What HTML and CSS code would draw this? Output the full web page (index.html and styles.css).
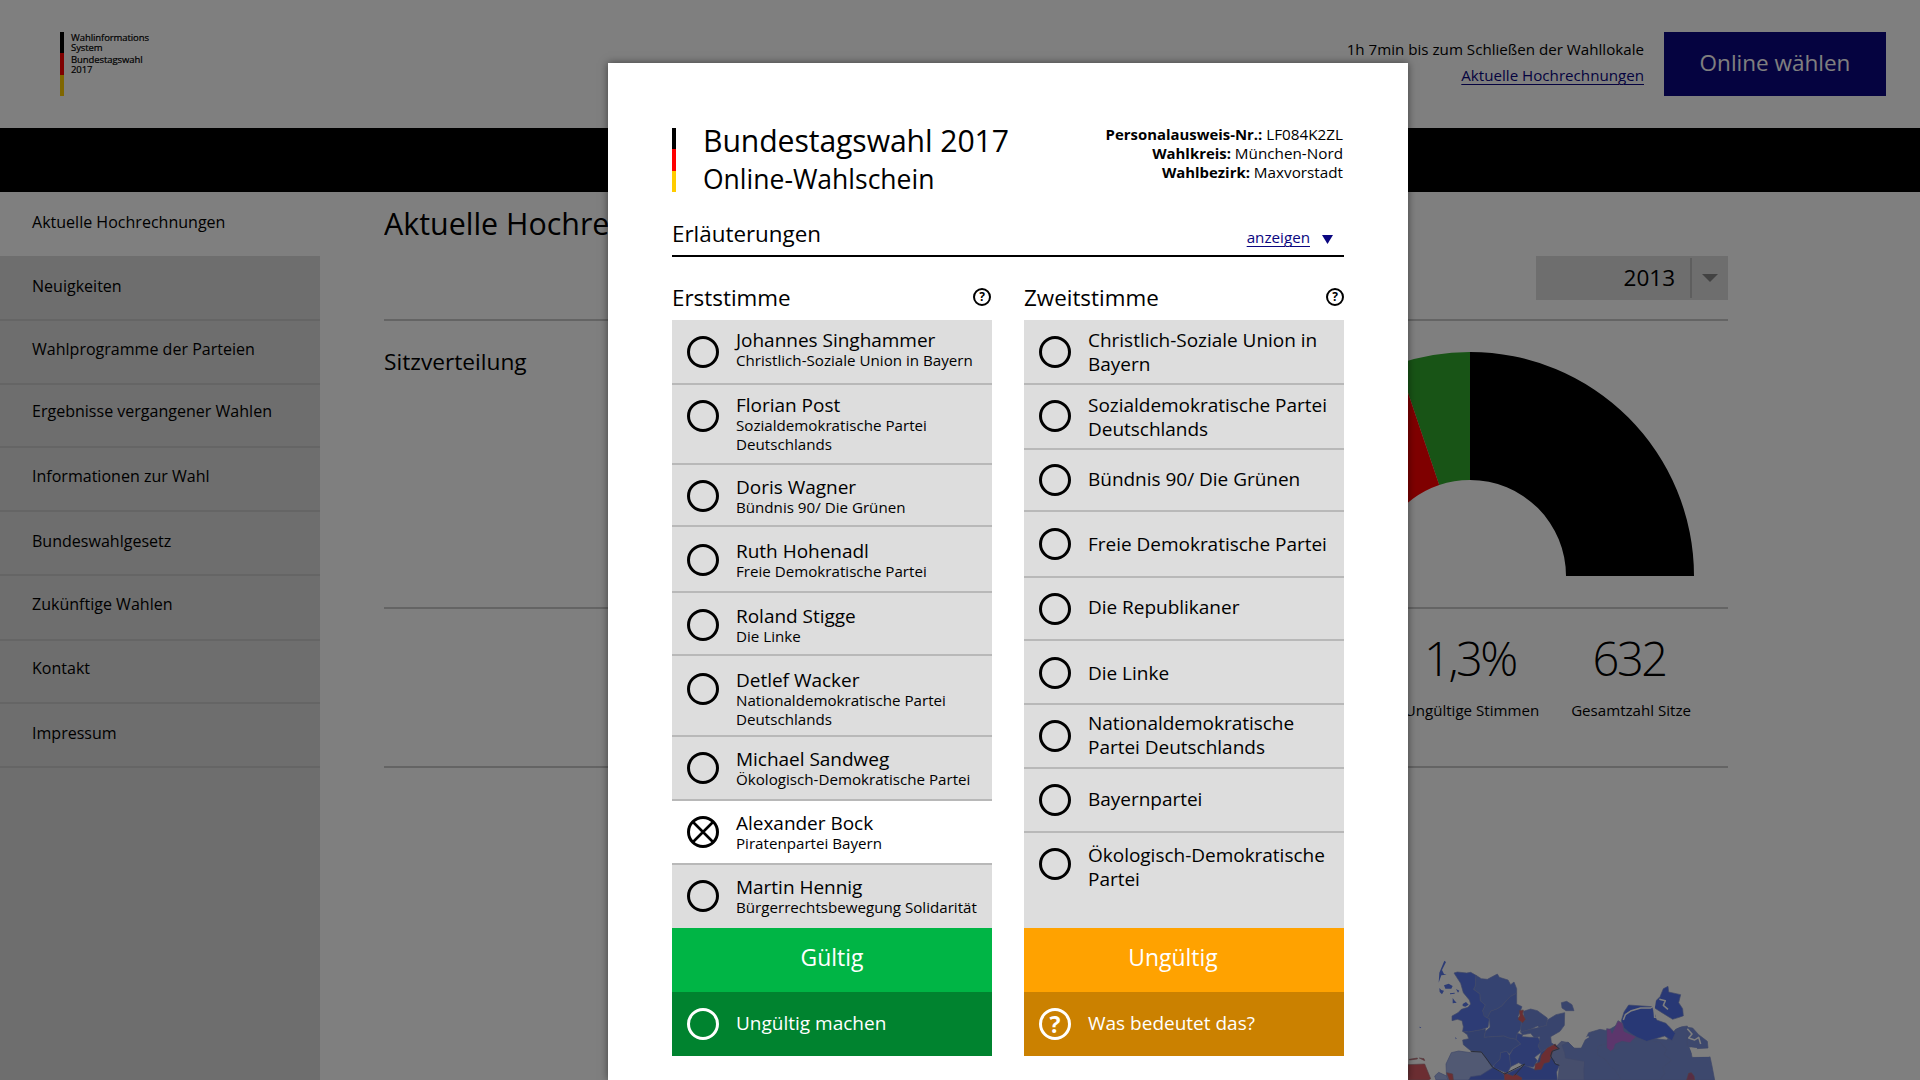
FILE: index.html
```html
<!DOCTYPE html>
<html lang="de">
<head>
<meta charset="utf-8">
<title>Bundestagswahl 2017</title>
<link rel="stylesheet" href="styles.css">
</head>
<body>
<div class="page">
  <header class="top">
    <div class="logo">
      <div class="flag"><i class="black"></i><i class="red"></i><i class="gold"></i></div>
      <div class="logo-text">
        <p>Wahlinformations<br>System</p>
        <p>Bundestagswahl<br>2017</p>
      </div>
    </div>
    <div class="status">
      <p>1h 7min bis zum Schließen der Wahllokale</p>
      <a class="link">Aktuelle Hochrechnungen</a>
    </div>
    <div class="vote">Online wählen</div>
  </header>
  <div class="band"></div>
  <div class="body">
    <nav class="side">
      <a class="active">Aktuelle Hochrechnungen</a>
      <a>Neuigkeiten</a>
      <a>Wahlprogramme der Parteien</a>
      <a>Ergebnisse vergangener Wahlen</a>
      <a>Informationen zur Wahl</a>
      <a>Bundeswahlgesetz</a>
      <a>Zukünftige Wahlen</a>
      <a>Kontakt</a>
      <a>Impressum</a>
    </nav>
    <main class="main">
      <section class="head">
        <h1>Aktuelle Hochre</h1>
        <div class="select">
          <span>2013</span>
          <svg width="16" height="8" viewBox="0 0 16 8"><path d="M0 0H16L8 8Z" fill="#848484"/></svg>
        </div>
      </section>
      <section class="seats">
        <h2>Sitzverteilung</h2>
        <svg class="donut" width="448" height="224" viewBox="-224 -224 448 224">
          <path d="M0-224A224 224 0 0 1 224 0H96A96 96 0 0 0 0-96Z" fill="#000"/>
          <path d="M0-224A224 224 0 0 0-71.8-212.2L-30.8-91A96 96 0 0 1 0-96Z" fill="#30a82c"/>
          <path d="M-71.8-212.2A224 224 0 0 0-224 0H-96A96 96 0 0 1-30.8-91Z" fill="#f00"/>
        </svg>
      </section>
      <section class="stats">
        <div class="stat"><b>1,3%</b><span>Ungültige Stimmen</span></div>
        <div class="stat"><b>632</b><span>Gesamtzahl Sitze</span></div>
      </section>
      <svg class="map" width="320" height="140" viewBox="24 0 960 420">
        <g stroke="#7f90d0" stroke-width="2" stroke-linejoin="round">
          <path fill="#5a78ea" d="M162 99L172 96L200 99L212 97L228 106L226 138L221 148L240 162L241 182L256 195L248 212L256 230L268 236L264 262L240 270L206 276L188 274L190 260L186 242L172 238L156 242L156 228L174 218L184 208L204 202L212 192L208 180L190 158L182 130Z"/>
          <path fill="#6a86e2" d="M228 106L244 116L262 118L292 102L298 112L324 120L332 134L342 126L350 146L350 160L330 170L305 198L292 206L272 214L262 234L252 228L248 212L256 195L241 182L240 162L221 148L226 138Z"/>
          <path fill="#6480e0" d="M350 160L350 192L366 200L354 230L364 246L362 268L352 280L348 298L326 294L312 288L252 292L256 274L270 262L268 236L262 234L272 214L292 206L305 198L330 170Z"/>
          <path fill="#7088da" d="M370 214L392 207L412 212L442 234L440 256L418 262L412 258L392 268L362 276L364 246L374 240Z"/>
          <path fill="#7088da" d="M442 240L468 224L494 218L493 256L480 274L452 290L454 308L462 314L446 322L424 336L414 318L420 290L402 292L392 280L368 284L362 276L392 268L418 262L440 256Z"/>
          <path fill="#6480dc" d="M206 276L240 270L256 266L256 274L252 292L312 288L326 294L348 298L362 312L340 326L328 342L320 334L302 338L300 358L282 374L278 384L256 354L244 336L212 332L190 314L188 300L206 296L202 284L188 274Z"/>
          <path fill="#5c78e4" d="M348 298L352 280L368 284L366 290L390 292L414 292L420 304L414 318L424 336L404 352L412 362L400 382L374 378L356 368L332 380L328 346L340 326L362 312Z"/>
          <path fill="#5c78e4" d="M302 338L320 334L328 346L332 380L322 400L282 384L282 374L300 358Z"/>
          <path fill="#a2b2e6" d="M140 420L138 372L154 338L176 333L212 338L244 336L258 356L278 384L264 400L252 420Z"/>
          <path fill="#a2b2e6" d="M104 408L116 397L140 408L144 420H108Z"/>
          <path fill="#5672e2" d="M206 420L212 410L242 406L280 382L314 404L374 376L404 388L424 336L448 322L460 348L466 368L478 376L470 396L472 420Z"/>
          <path fill="#8c9cd8" d="M470 318L484 304L506 308L522 324L546 326L548 320L554 420H474L478 376L452 350L458 328Z"/>
          <path fill="#7a90da" d="M486 316L504 306L524 326L544 324L566 278L600 268L622 272L660 250L710 290L800 300L832 262L862 258L876 352L930 350L936 378L944 420H552V364L496 354L494 338Z"/>
          <path fill="none" d="M626 310L594 318L592 344L618 360L632 380L644 388L664 420M758 304L780 306L800 328L792 344L816 360L788 382L794 400L780 420"/>
          <path fill="#5070ea" d="M664 242L672 216L686 195L756 200L770 240L798 250L826 280L816 302L794 288L740 304L706 290L686 276L670 262Z"/>
          <path fill="#5070ea" d="M780 170L790 146L804 139L806 156L842 164L836 188L848 206L850 228L818 238L786 218L764 204L768 182Z"/>
          <path fill="#b86cd8" d="M654 242L668 250L672 274L708 290L690 308L666 304L646 312L642 326L632 334L620 324L620 266L632 268L636 280Z"/>
          <path fill="#7a90da" d="M862 262L878 264L896 284L922 304L924 324L890 326L862 318Z"/>
          <path fill="#7088da" d="M484 188L500 184L516 194L522 212L498 212L486 204Z"/>
        </g>
        <g fill="#5a78ea">
          <path d="M133 62L138 66L126 90L132 102L140 104L124 106L116 128L118 98Z"/>
          <path d="M132 136L146 131L158 138L154 146L136 146ZM118 144L124 150L132 152L126 163L119 156ZM158 174L164 182L170 188L158 190ZM188 192L198 186L206 194L196 200L188 198ZM150 160L164 158L164 161L150 163ZM168 147L178 152L174 158ZM58 260L64 262L60 265ZM166 290L170 296L167 298Z"/>
        </g>
        <g fill="none" stroke="#fff" stroke-width="4.5" stroke-linejoin="round">
          <path d="M670 240L676 224L694 212L722 204L752 204L764 196"/>
          <path d="M764 234L762 206L766 172L776 164"/>
          <path d="M778 178L796 182L790 196L804 208M766 232L794 238L806 254L824 262L850 240M862 266L876 282L866 294L884 300L896 292L902 312"/>
          <path d="M538 312L548 300L566 290"/>
        </g>
        <path fill="#fff" d="M820 244L852 228L858 252L838 262L824 268ZM868 322L892 324L886 334L932 350L880 350Z"/>
        <g fill="#d85c64" stroke="#a87880" stroke-width="2">
          <path d="M358 212L370 210L368 222L376 238L368 248L354 238L360 226Z"/>
          <path d="M466 312L474 326L460 330L454 346L448 366L432 370L424 388L404 390L406 372L420 366L424 346L442 324Z"/>
          <path d="M24 374L74 372L92 416L86 420H24ZM28 358L52 354V357L28 360ZM58 354L72 356L74 362Z"/>
          <path d="M140 398L158 402L160 420H148Z"/>
          <path d="M312 398L338 408L346 402L366 414L364 420H314Z"/>
          <path fill="#b05a88" d="M866 400L874 398L882 408L884 420H860Z"/>
        </g>
        <path fill="none" stroke="#555c74" stroke-width="3" d="M212 334L244 336L258 354L278 382L314 402L342 388L374 372L344 406M462 314L478 326L456 334L452 348L466 372L478 376"/>
      </svg>
    </main>
  </div>
</div>

<div class="overlay"></div>

<svg class="defs" width="0" height="0">
  <symbol id="ring" viewBox="0 0 32 32"><circle cx="16" cy="16" r="14.5" fill="none" stroke="currentColor" stroke-width="3"/></symbol>
  <symbol id="cross" viewBox="0 0 32 32"><circle cx="16" cy="16" r="14.5" fill="none" stroke="currentColor" stroke-width="3"/><path d="M6 6L26 26M26 6L6 26" stroke="currentColor" stroke-width="2.6"/></symbol>
</svg>

<div class="modal">
  <header class="m-head">
    <div class="flag"><i class="black"></i><i class="red"></i><i class="gold"></i></div>
    <div class="m-title">
      <h1>Bundestagswahl 2017</h1>
      <h2>Online-Wahlschein</h2>
    </div>
    <div class="m-id">
      <p><b>Personalausweis-Nr.:</b> LF084K2ZL</p>
      <p><b>Wahlkreis:</b> München-Nord</p>
      <p><b>Wahlbezirk:</b> Maxvorstadt</p>
    </div>
  </header>
  <div class="m-info">
    <h3>Erläuterungen</h3>
    <a class="link">anzeigen</a>
    <svg width="11" height="9" viewBox="0 0 11 9"><path d="M0 0H11L5.5 9Z" fill="#0a0680"/></svg>
  </div>
  <div class="cols">
    <section class="col">
      <div class="col-head"><h3>Erststimme</h3>
        <svg width="18" height="18" viewBox="0 0 18 18"><circle cx="9" cy="9" r="8" fill="none" stroke="#000" stroke-width="2"/><text class="q" x="9" y="13">?</text></svg>
      </div>
      <ul class="list first">
        <li><svg><use href="#ring"/></svg><div><p>Johannes Singhammer</p><small>Christlich-Soziale Union in Bayern</small></div></li>
        <li><svg><use href="#ring"/></svg><div><p>Florian Post</p><small>Sozialdemokratische Partei<br>Deutschlands</small></div></li>
        <li><svg><use href="#ring"/></svg><div><p>Doris Wagner</p><small>Bündnis 90/ Die Grünen</small></div></li>
        <li><svg><use href="#ring"/></svg><div><p>Ruth Hohenadl</p><small>Freie Demokratische Partei</small></div></li>
        <li><svg><use href="#ring"/></svg><div><p>Roland Stigge</p><small>Die Linke</small></div></li>
        <li><svg><use href="#ring"/></svg><div><p>Detlef Wacker</p><small>Nationaldemokratische Partei<br>Deutschlands</small></div></li>
        <li><svg><use href="#ring"/></svg><div><p>Michael Sandweg</p><small>Ökologisch-Demokratische Partei</small></div></li>
        <li class="picked"><svg><use href="#cross"/></svg><div><p>Alexander Bock</p><small>Piratenpartei Bayern</small></div></li>
        <li><svg><use href="#ring"/></svg><div><p>Martin Hennig</p><small>Bürgerrechtsbewegung Solidarität</small></div></li>
      </ul>
      <div class="verdict green">Gültig</div>
      <div class="action dark-green"><svg><use href="#ring"/></svg><p>Ungültig machen</p></div>
    </section>
    <section class="col">
      <div class="col-head"><h3>Zweitstimme</h3>
        <svg width="18" height="18" viewBox="0 0 18 18"><circle cx="9" cy="9" r="8" fill="none" stroke="#000" stroke-width="2"/><text class="q" x="9" y="13">?</text></svg>
      </div>
      <ul class="list second">
        <li><svg><use href="#ring"/></svg><div><p>Christlich-Soziale Union in<br>Bayern</p></div></li>
        <li><svg><use href="#ring"/></svg><div><p>Sozialdemokratische Partei<br>Deutschlands</p></div></li>
        <li><svg><use href="#ring"/></svg><div><p>Bündnis 90/ Die Grünen</p></div></li>
        <li><svg><use href="#ring"/></svg><div><p>Freie Demokratische Partei</p></div></li>
        <li><svg><use href="#ring"/></svg><div><p>Die Republikaner</p></div></li>
        <li><svg><use href="#ring"/></svg><div><p>Die Linke</p></div></li>
        <li><svg><use href="#ring"/></svg><div><p>Nationaldemokratische<br>Partei Deutschlands</p></div></li>
        <li><svg><use href="#ring"/></svg><div><p>Bayernpartei</p></div></li>
        <li><svg><use href="#ring"/></svg><div><p>Ökologisch-Demokratische<br>Partei</p></div></li>
      </ul>
      <div class="verdict orange">Ungültig</div>
      <div class="action dark-orange"><svg viewBox="0 0 32 32"><circle cx="16" cy="16" r="14.5" fill="none" stroke="#fff" stroke-width="3"/><text class="q big" x="16" y="24.5">?</text></svg><p>Was bedeutet das?</p></div>
    </section>
  </div>
</div>
</body>
</html>
```
FILE: styles.css
```css
* { box-sizing: border-box; margin: 0; padding: 0; }
html, body { height: 1080px; overflow: hidden; }
body { font-family: "Open Sans", "Noto Sans", sans-serif; color: #000; background: #fff; }
h1, h2, h3 { font-weight: 400; white-space: nowrap; }
p, a, span, small { white-space: nowrap; }
svg { display: block; flex: none; }
.defs { position: absolute; }

.page { height: 1080px; display: flex; flex-direction: column; background: #fff; overflow: hidden; }

.flag { width: 4px; height: 64px; display: flex; flex-direction: column; flex: none; }
.flag i { flex: 1; }
.black { background: #000; }
.red { background: #f00; }
.gold { background: #fc0; }

.link { color: #0a0680; text-decoration: underline; text-decoration-thickness: 1px; text-underline-offset: 3px; }

.top { height: 128px; flex: none; padding: 32px 34px 0 60px; display: flex; align-items: flex-start; }
.logo { display: flex; gap: 6px; margin-right: auto; }
.logo-text { display: flex; flex-direction: column; gap: 2px; padding: 1px 0 0 1px; font-size: 9.5px; line-height: 10px; letter-spacing: -0.08px; -webkit-text-stroke: .2px #000; }
.status { text-align: right; font-size: 15.15px; line-height: 26px; margin-top: 4px; margin-right: 20px; }
.vote { width: 222px; height: 64px; background: #0a0680; color: #fff; text-align: center; font-size: 22.5px; line-height: 62px; }
.band { height: 64px; background: #000; flex: none; }

.body { flex: 1; display: flex; min-height: 0; }
.side { width: 320px; background: #dcdcdc; display: grid; grid-template-rows: 64px 65px 64px 63px 64px 64px 65px 63px 64px; }
.side a { padding-left: 32px; font-size: 16.05px; border-bottom: 2px solid #cacaca; line-height: 56px; }
.side a.active { background: #fff; border: 0; }
.side a:nth-child(1), .side a:nth-child(2) { line-height: 60px; }
.side a:nth-child(4) { line-height: 52px; }
.side a:nth-child(6), .side a:nth-child(9) { line-height: 58px; }
.side a:nth-child(8) { line-height: 54px; }

.main { width: 1408px; padding-left: 64px; display: flex; flex-direction: column; }
.main section { border-bottom: 2px solid #c8c8c8; flex: none; }
.head { height: 129px; }
.head h1 { font-size: 30.4px; line-height: 62px; padding-top: 1px; width: 224px; overflow: hidden; }
.select { width: 192px; height: 44px; margin: 1px 0 0 auto; background: #dcdcdc; display: flex; justify-content: flex-end; align-items: center; padding-right: 10px; gap: 10px; }
.select span { font-size: 22.5px; line-height: 40px; height: 40px; padding-right: 15px; border-right: 2px solid #bcbcbc; }
.seats { height: 288px; display: flex; justify-content: space-between; padding-right: 34px; }
.seats h2 { font-size: 22.7px; line-height: 30px; padding-top: 26px; }
.donut { margin-top: 31px; }
.stats { height: 159px; display: flex; justify-content: flex-end; gap: 32px; padding: 17px 37px 0 0; }
.stat { text-align: center; display: flex; flex-direction: column; gap: 9px; }
.stat b { font-weight: 300; font-size: 47px; line-height: 64px; letter-spacing: -2.5px; padding-right: 4px; }
.stat span { font-size: 15.1px; line-height: 22px; }
.map { margin: 172px 0 0 auto; }

.overlay { position: absolute; inset: 0; background: rgba(0, 0, 0, .5); }

.modal { position: absolute; left: 608px; top: 63px; width: 800px; height: 1017px; background: #fff; padding: 65px 64px 0; box-shadow: 0 0 8px rgba(0, 0, 0, .5); }
.m-head { height: 64px; display: flex; align-items: flex-start; }
.m-title { margin: -5px auto 0 27px; }
.m-title h1 { font-size: 30.2px; line-height: 36px; letter-spacing: -.1px; }
.m-title h2 { font-size: 26.5px; line-height: 32px; margin-top: 4px; }
.m-id { text-align: right; font-size: 15.25px; line-height: 19px; margin: -3px 1px 0 0; }
.m-id b { font-size: 14.9px; }

.m-info { height: 65px; border-bottom: 2px solid #000; display: flex; align-items: baseline; padding: 27px 11px 0 0; }
.m-info h3 { font-size: 22.4px; line-height: 30px; margin: 0 auto 0 0; }
.m-info .link { font-size: 15.2px; margin-right: 12px; position: relative; top: 1px; }
.m-info svg { position: relative; top: 2px; }

.cols { display: flex; gap: 32px; }
.col { width: 320px; }
.col-head { height: 63px; display: flex; justify-content: space-between; align-items: flex-start; }
.col-head h3 { font-size: 22.4px; line-height: 30px; margin-top: 26px; }
.col-head svg { margin-top: 31px; }
.col:first-child .col-head { padding-right: 1px; }
.q { font-size: 12px; font-weight: 700; text-anchor: middle; }
.q.big { font-size: 23px; fill: #fff; }

.list { list-style: none; display: grid; background: #ddd; font-size: 19px; line-height: 24px; height: 608px; }
.list li { display: flex; align-items: flex-start; gap: 17px; padding-left: 15px; border-bottom: 2px solid #b8b8b8; }
.list li:last-child { border: 0; }
.list svg, .action svg { width: 32px; height: 32px; margin-top: 15px; }
.list li > div { margin-top: 8px; }
.list p { letter-spacing: -.02px; }
.list small { display: block; font-size: 15.15px; line-height: 19px; margin-top: -1px; }
.picked { background: #fff; }

.first { grid-template-rows: 65px 80px 62px 66px 63px 81px 64px 64px 63px; }
.second { grid-template-rows: 65px 65px 62px 66px 63px 64px 64px 64px 95px; }
.first li:nth-child(1) svg, .first li:nth-child(5) svg, .second li:nth-child(1) svg, .second li:nth-child(4) svg, .second li:nth-child(6) svg { margin-top: 16px; }
.first li:nth-child(4) svg, .first li:nth-child(6) svg { margin-top: 17px; }
.second li:nth-child(3) svg { margin-top: 14px; }
.first li:nth-child(3) > div, .first li:nth-child(7) > div, .first li:nth-child(8) > div, .first li:nth-child(9) > div, .second li:nth-child(9) > div { margin-top: 10px; }
.first li:nth-child(4) > div, .first li:nth-child(6) > div { margin-top: 12px; }
.first li:nth-child(5) > div { margin-top: 11px; }
.second li:nth-child(3) > div, .second li:nth-child(5) > div { margin-top: 17px; }
.second li:nth-child(4) > div, .second li:nth-child(6) > div { margin-top: 20px; }
.second li:nth-child(7) > div { margin-top: 6px; }
.second li:nth-child(8) > div { margin-top: 18px; }

.verdict { height: 64px; color: #fff; text-align: center; font-size: 22.9px; line-height: 60px; }
.action { height: 64px; color: #fff; display: flex; align-items: flex-start; gap: 17px; padding-left: 15px; font-size: 19px; line-height: 24px; }
.action svg { margin-top: 16px; }
.action p { margin-top: 19px; }
.green { background: #00b545; }
.dark-green { background: #00832f; }
.orange { background: #ffa200; padding-right: 22px; }
.dark-orange { background: #cb8100; }
```
